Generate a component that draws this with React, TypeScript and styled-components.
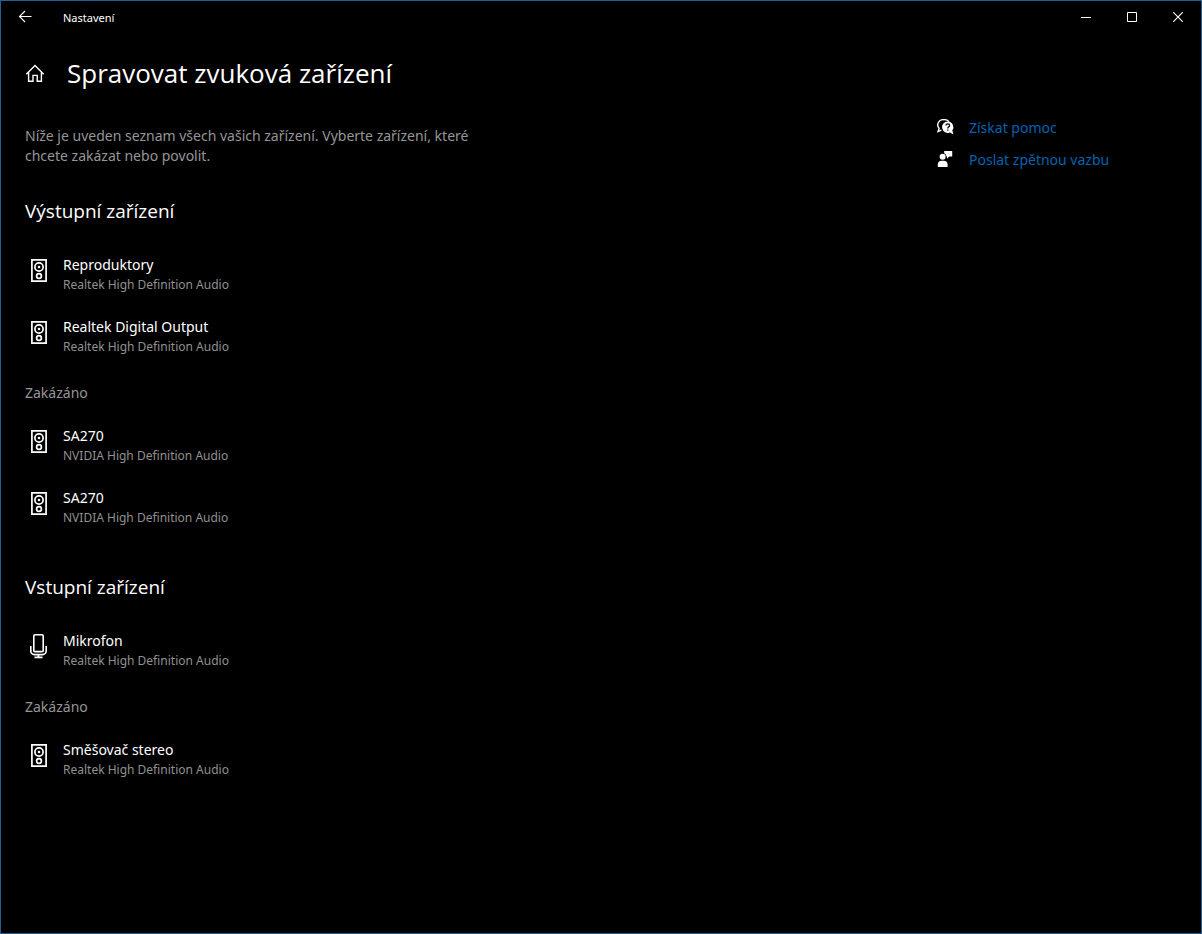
import React from "react";
import styled, { createGlobalStyle } from "styled-components";

const GlobalStyle = createGlobalStyle`
  * { box-sizing: border-box; }
  body {
    margin: 0;
    background: #000;
    color: #fff;
    font-family: "Noto Sans", "Open Sans", sans-serif;
    font-size: 14px;
    line-height: 20px;
  }
  h1, h2, h3, p, ul { margin: 0; padding: 0; font-weight: 400; }
  ul { list-style: none; }
  svg { display: block; flex: none; }
`;

const Window = styled.div`
  min-height: 100vh;
  border: 1px solid #235f93;
`;

const TitleBar = styled.header`
  display: flex;
  align-items: center;
  height: 32px;
`;

const BarButton = styled.button<{ $width: number }>`
  display: flex;
  align-items: center;
  justify-content: center;
  width: ${(p) => p.$width}px;
  height: 32px;
  padding: 0;
  border: 0;
  background: transparent;
  color: inherit;
`;

const AppName = styled.span`
  flex: 1;
  padding: 2px 0 0 14px;
  font-size: 11px;
`;

const PageHeader = styled.div`
  display: flex;
  align-items: center;
  gap: 20px;
  padding: 20px 24px 0;
`;

const HomeButton = styled.button`
  display: flex;
  padding: 0;
  border: 0;
  background: transparent;
  color: inherit;
`;

const PageTitle = styled.h1`
  font-family: "Open Sans", sans-serif;
  font-size: 26px;
  line-height: 40px;
`;

const Content = styled.div`
  display: flex;
  justify-content: space-between;
  gap: 24px;
  padding: 0 24px 24px;
`;

const Main = styled.main`
  flex: 0 1 460px;
  padding-top: 33px;
`;

const Intro = styled.p`
  color: #969696;
`;

const Section = styled.section`
  margin-top: 31px;

  & + & { margin-top: 34px; }
`;

const SectionTitle = styled.h2`
  margin-bottom: 19px;
  font-family: "Open Sans", sans-serif;
  font-size: 19px;
  line-height: 28px;
`;

const GroupTitle = styled.h3`
  margin: 15px 0 12px;
  font-size: 14px;
  line-height: 20px;
  color: #969696;
`;

const DeviceButton = styled.button`
  display: flex;
  gap: 10px;
  width: 100%;
  padding: 11px 0;
  border: 0;
  background: transparent;
  color: inherit;
  font: inherit;
  text-align: left;
`;

const DeviceText = styled.span`
  display: flex;
  flex-direction: column;
`;

const Driver = styled.span`
  font-size: 12px;
  color: #919191;
`;

const Aside = styled.aside`
  display: flex;
  flex-direction: column;
  gap: 8px;
  flex: 0 0 240px;
  padding-top: 23px;
`;

const HelpLink = styled.a`
  display: flex;
  align-items: center;
  gap: 14px;
  line-height: 24px;
  color: #0063b1;
  text-decoration: none;

  svg { color: #fff; }
`;

const BackIcon = () => (
  <svg width="14" height="14" viewBox="0 0 14 14" fill="none" stroke="currentColor" strokeWidth="1.1">
    <path d="M13.5 6.5H1.6M7 1L1.5 6.5L7 12" />
  </svg>
);

const HomeIcon = () => (
  <svg width="22" height="22" viewBox="0 0 22 22" fill="none" stroke="currentColor" strokeWidth="1.4">
    <path d="M1.3 12.2L10 3.6L18.7 12.2M3.6 10.2V19.3H8V13.4H12.2V19.3H16.4V10.2" />
  </svg>
);

const MinimizeIcon = () => (
  <svg width="10" height="10" viewBox="0 0 10 10" shapeRendering="crispEdges">
    <path d="M0 5H10V6H0Z" fill="currentColor" />
  </svg>
);

const MaximizeIcon = () => (
  <svg width="10" height="10" viewBox="0 0 10 10" fill="none" stroke="currentColor">
    <path d="M.5 .5H9.5V9.5H.5Z" />
  </svg>
);

const CloseIcon = () => (
  <svg width="10" height="10" viewBox="0 0 10 10" fill="none" stroke="currentColor" strokeWidth="1.1">
    <path d="M.2 .2L9.8 9.8M9.8 .2L.2 9.8" />
  </svg>
);

const SpeakerIcon = () => (
  <svg width="28" height="30" viewBox="0 0 28 30" fill="none" stroke="currentColor" strokeWidth="1.7">
    <path d="M6.9 4.9H21.1V26.1H6.9Z" />
    <circle cx="14" cy="12" r="4.1" />
    <circle cx="14" cy="12" r="1.3" fill="currentColor" stroke="none" />
    <circle cx="14" cy="21" r="2.4" />
  </svg>
);

const MicrophoneIcon = () => (
  <svg width="28" height="30" viewBox="0 0 28 30" fill="none" stroke="currentColor" strokeWidth="1.6">
    <rect x="8.8" y="3.8" width="9.4" height="16.8" rx="1.2" />
    <path d="M5.8 15V20A3.6 3.6 0 0 0 9.4 23.6H17.6A3.6 3.6 0 0 0 21.2 20V15M13.5 23.6V26.4M9.5 26.4H17.5" />
  </svg>
);

const HelpIcon = () => (
  <svg width="18" height="18" viewBox="0 1 18 18">
    <path
      d="M6.6 1.7A5.2 5.2 0 0 0 2.1 10.3L1 13.6L4.4 12.2M6.6 1.7C9 1.5 10.9 2.1 12 3.6"
      fill="none"
      stroke="currentColor"
      strokeWidth="1.4"
    />
    <path
      d="M10.7 3.4A5.8 5.8 0 1 0 13 14.6L16.4 16.6L15.3 12.5A5.8 5.8 0 0 0 10.7 3.4Z"
      fill="currentColor"
    />
    <path
      d="M9 7.5C9 6.4 9.8 5.8 10.8 5.8S12.6 6.4 12.6 7.4C12.6 8.7 10.8 8.8 10.8 10.4M10.8 11.4V12.8"
      fill="none"
      stroke="#000"
      strokeWidth="1.3"
    />
  </svg>
);

const FeedbackIcon = () => (
  <svg width="18" height="18" viewBox="0 1 18 18" fill="currentColor">
    <path d="M7.2 1H15.2V6.6H12.2L10 8.8V6.6H9.4A3.9 3.9 0 0 0 7.2 3.2Z" />
    <circle cx="5.6" cy="6.8" r="3" />
    <path d="M.8 17V14.6C.8 12.2 2.2 10.7 4.6 10.7H6.8C9.2 10.7 10.6 12.2 10.6 14.6V17Z" />
  </svg>
);

interface DeviceProps {
  name: string;
  driver: string;
  icon?: React.ReactNode;
}

const Device = ({ name, driver, icon = <SpeakerIcon /> }: DeviceProps) => (
  <li>
    <DeviceButton type="button">
      {icon}
      <DeviceText>
        <span>{name}</span>
        <Driver>{driver}</Driver>
      </DeviceText>
    </DeviceButton>
  </li>
);

const REALTEK = "Realtek High Definition Audio";
const NVIDIA = "NVIDIA High Definition Audio";

export default function App() {
  return (
    <Window>
      <GlobalStyle />
      <TitleBar>
        <BarButton $width={48} type="button" aria-label="Zpět"><BackIcon /></BarButton>
        <AppName>Nastavení</AppName>
        <BarButton $width={46} type="button" aria-label="Minimalizovat"><MinimizeIcon /></BarButton>
        <BarButton $width={46} type="button" aria-label="Maximalizovat"><MaximizeIcon /></BarButton>
        <BarButton $width={46} type="button" aria-label="Zavřít"><CloseIcon /></BarButton>
      </TitleBar>
      <PageHeader>
        <HomeButton type="button" aria-label="Domů"><HomeIcon /></HomeButton>
        <PageTitle>Spravovat zvuková zařízení</PageTitle>
      </PageHeader>
      <Content>
        <Main>
          <Intro>
            Níže je uveden seznam všech vašich zařízení. Vyberte zařízení, které chcete zakázat nebo povolit.
          </Intro>
          <Section>
            <SectionTitle>Výstupní zařízení</SectionTitle>
            <ul>
              <Device name="Reproduktory" driver={REALTEK} />
              <Device name="Realtek Digital Output" driver={REALTEK} />
            </ul>
            <GroupTitle>Zakázáno</GroupTitle>
            <ul>
              <Device name="SA270" driver={NVIDIA} />
              <Device name="SA270" driver={NVIDIA} />
            </ul>
          </Section>
          <Section>
            <SectionTitle>Vstupní zařízení</SectionTitle>
            <ul>
              <Device name="Mikrofon" driver={REALTEK} icon={<MicrophoneIcon />} />
            </ul>
            <GroupTitle>Zakázáno</GroupTitle>
            <ul>
              <Device name="Směšovač stereo" driver={REALTEK} />
            </ul>
          </Section>
        </Main>
        <Aside>
          <HelpLink href="#help"><HelpIcon />Získat pomoc</HelpLink>
          <HelpLink href="#feedback"><FeedbackIcon />Poslat zpětnou vazbu</HelpLink>
        </Aside>
      </Content>
    </Window>
  );
}
